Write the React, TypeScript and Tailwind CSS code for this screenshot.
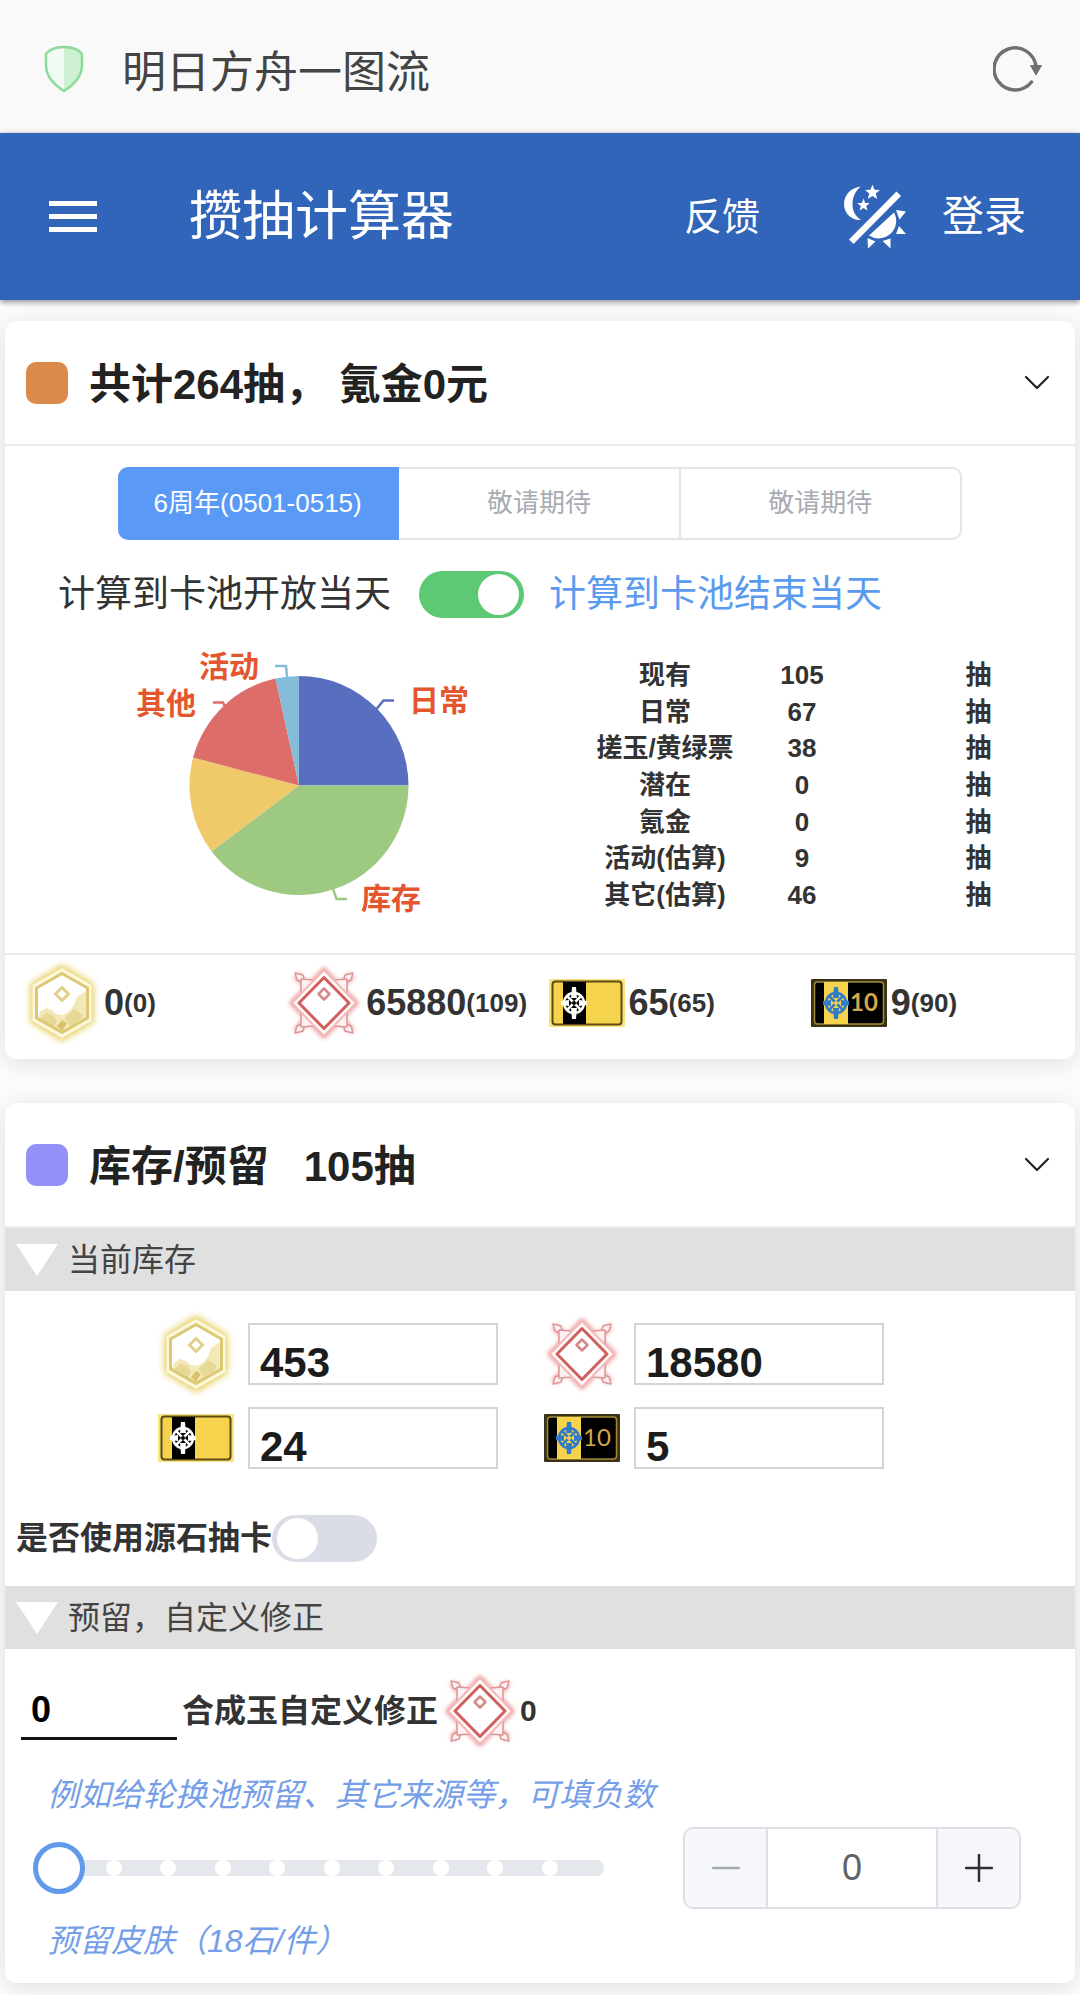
import { useState } from 'react';
import type { ReactNode } from 'react';

type IconProps = { className?: string };

const POOLS = [
  { id: 'anniversary', label: '6周年(0501-0515)', disabled: false },
  { id: 'tbd-1', label: '敬请期待', disabled: true },
  { id: 'tbd-2', label: '敬请期待', disabled: true },
];

const SUMMARY = [
  { name: '现有', count: 105 },
  { name: '日常', count: 67 },
  { name: '搓玉/黄绿票', count: 38 },
  { name: '潜在', count: 0 },
  { name: '氪金', count: 0 },
  { name: '活动(估算)', count: 9 },
  { name: '其它(估算)', count: 46 },
];

const STEPS = [1, 2, 3, 4, 5, 6, 7, 8, 9];

/* ---------- icons ---------- */

function ShieldIcon() {
  return (
    <svg viewBox="0 0 40 48" className="h-12 w-10" aria-hidden="true">
      <path d="M20 2C13 2 6.500 4.500 2.500 8.500V20c0 10 7 19.500 17.500 26z" fill="#f1fbf3" />
      <path d="M20 2c7 0 13.500 2.500 17.500 6.500V20c0 10-7 19.500-17.500 26z" fill="#cdf0d3" />
      <path
        d="M20 2C13 2 5.500 4.500 2 9v11c0 10.500 7.500 19.500 18 26 10.500-6.500 18-15.500 18-26V9C34.500 4.500 27 2 20 2z"
        fill="none"
        stroke="#8ddb9b"
        strokeWidth="2.500"
        strokeLinejoin="round"
      />
    </svg>
  );
}

function ReloadIcon() {
  return (
    <svg viewBox="0 0 50 50" className="h-[50px] w-[50px]" aria-hidden="true">
      <path d="M38.500 38A21 21 0 1 1 43 23" fill="none" stroke="#707070" strokeWidth="3.500" strokeLinecap="round" />
      <path d="M37.500 21.500h11L43 31z" fill="#707070" stroke="#707070" strokeLinejoin="round" />
    </svg>
  );
}

function DayNightIcon() {
  return (
    <svg viewBox="0 0 62 64" className="h-16 w-[62px]" fill="#fff" aria-hidden="true">
      <path d="M17 1.500C7 2.500 0 10 0 19s7 16.500 17 16C11.500 31.500 8.500 26 8.500 19S11.500 5.500 17 1.500z" />
      <path d="M28.500-.5l2 5.200 5.500.3-4.300 3.500 1.500 5.500-4.700-3.100-4.700 3.100 1.500-5.500L21 5l5.500-.3z" />
      <path d="M19.500 13.500l1.700 4.400 4.600.2-3.600 2.900 1.300 4.600-4-2.600-4 2.600 1.300-4.600-3.600-2.900 4.600-.2z" />
      <path d="M52.500 6.500L57 11 9.500 59 5 54.500z" />
      <path d="M25 50.500L50 27.500A17.500 17.500 0 0 1 25 50.500z" />
      <path d="M52 25l10 1.500-6.500 8z" />
      <path d="M55 41l7 8H52z" />
      <path d="M46.500 53.500v10L38.500 56z" />
      <path d="M23.500 53l8 3.500-7.500 7z" />
    </svg>
  );
}

function ChevronIcon() {
  return (
    <svg viewBox="0 0 26 16" className="h-4 w-[26px]" aria-hidden="true">
      <path d="M2 2l11 11L24 2" fill="none" stroke="#222" strokeWidth="2.200" strokeLinecap="round" strokeLinejoin="round" />
    </svg>
  );
}

// 源石
function OriginiteIcon({ className = '' }: IconProps) {
  return (
    <svg viewBox="0 0 80 80" className={`h-20 w-20 shrink-0 overflow-visible ${className}`} aria-hidden="true">
      <path d="M40 6l28 17v34L40 74 12 57V23z" fill="#e8d36c" stroke="#e8d36c" strokeWidth="8" strokeLinejoin="round" className="blur-[3px]" />
      <path d="M40 5l29.500 17v36L40 75 10.500 58V22z" fill="#fdf8dc" />
      <path d="M40 10l26 15v30L40 70 14 55V25z" fill="#fff" />
      <path d="M64 28v27L40 69 16 55l2-6 6-4 6 2 4 4 7 1 7-4 4-6 3-8z" fill="#f3e8b8" />
      <path d="M24 50l7 2 4 6-3 6-14-8zM52 46l9 6-3 5-10 6-5-8z" fill="#e8d896" />
      <path d="M40 57l5 3-5 8-5-5z" fill="#d9c36a" />
      <path d="M40 10.500l25.500 14.500v30L40 69.500 14.500 55V25z" fill="none" stroke="#dcc873" strokeWidth="3" />
      <path d="M40 24.500l6.500 6.500-6.500 6.500-6.500-6.500z" fill="#fff" stroke="#e0d08a" strokeWidth="3" />
    </svg>
  );
}

// 合成玉
function OrundumIcon({ className = '' }: IconProps) {
  return (
    <svg viewBox="0 0 80 80" className={`h-20 w-20 shrink-0 ${className}`} fill="none" strokeLinejoin="round" aria-hidden="true">
      <g stroke="#ee9c9c" strokeWidth="5" className="blur-[2px]">
        <path d="M40 7l32 33-32 33L8 40z" />
        <path d="M12 12l16 16M68 12L52 28M12 68l16-16M68 68L52 52" strokeWidth="7" />
      </g>
      <g stroke="#dd9696" strokeWidth="1.500" fill="#fdf0f0">
        <path d="M11 10l8 2 2 8-8-3zM69 10l-8 2-2 8 8-3zM11 70l8-2 2-8-8 3zM69 70l-8-2-2-8 8 3z" />
        <path d="M17 16l12 1 4 5-12 12-4-5zM63 16l-12 1-4 5 12 12 4-5zM17 64l12-1 4-5-12-12-4 5zM63 64l-12-1-4-5 12-12 4 5z" />
      </g>
      <path d="M40 7l32 33-32 33L8 40z" fill="#fff8f7" stroke="#f2b9b9" strokeWidth="2" />
      <path d="M40 14.500L65 40 40 65.500 15 40z" fill="#fff" stroke="#cf6060" strokeWidth="3" />
      <path d="M40 25.500l5.500 5.500-5.500 5.500-5.500-5.500z" fill="#fff" stroke="#d58a8a" strokeWidth="2.500" />
    </svg>
  );
}

function Crosshair({ color, hole }: { color: string; hole: string }) {
  return (
    <g>
      <circle cx="25" cy="24" r="10" fill={hole} stroke={color} strokeWidth="2.500" />
      <path d="M18 17l14 14M32 17L18 31" stroke={color} strokeWidth="2.500" />
      <path d="M23 8h4l1 11h-6zM23 40h4l1-11h-6zM12 22v4l8 1v-6zM38 22v4l-8 1v-6z" fill={color} />
      <circle cx="25" cy="24" r="2" fill={hole} />
    </g>
  );
}

// 单抽券
function TicketIcon({ className = '' }: IconProps) {
  return (
    <svg viewBox="0 0 76 48" className={`mx-[2px] h-12 w-[76px] shrink-0 ${className}`} aria-hidden="true">
      <rect width="76" height="48" fill="#f8e37c" />
      <rect x="3.500" y="2.500" width="69" height="43" rx="3" fill="#f5d34c" stroke="#5c4a12" strokeWidth="2" />
      <rect x="14" y="3" width="23" height="42" fill="#000" />
      <Crosshair color="#fff" hole="#000" />
    </svg>
  );
}

// 十连券
function TenTicketIcon({ className = '' }: IconProps) {
  return (
    <svg viewBox="0 0 76 48" className={`mx-[2px] h-12 w-[76px] shrink-0 ${className}`} aria-hidden="true">
      <rect width="76" height="48" rx="1" fill="#3a3216" />
      <rect x="3.500" y="3" width="69" height="42" rx="3" fill="#000" stroke="#a18a35" strokeWidth="1.500" />
      <rect x="13" y="3" width="24" height="42" fill="#f5d34c" />
      <Crosshair color="#2f7bc8" hole="#f5d34c" />
      <text x="53" y="32" textAnchor="middle" fontFamily="Lato, sans-serif" fontSize="24" fill="#d3a84a">
        10
      </text>
    </svg>
  );
}

/* ---------- building blocks ---------- */

type CardProps = { color: string; title: string; children: ReactNode };

function Card({ color, title, children }: CardProps) {
  return (
    <section className="rounded-xl bg-white shadow-[0_4px_24px_rgba(0,0,0,0.12)]">
      <header className="flex h-[125px] items-center border-b-2 border-[#ececee] pr-[25px] pl-[21px]">
        <span className={`h-[42px] w-[42px] rounded-[10px] ${color}`} />
        <h2 className="ml-[21px] pt-1 text-[42px] leading-[60px] font-bold whitespace-pre text-[#222]">{title}</h2>
        <button type="button" aria-label="展开或收起" className="ml-auto">
          <ChevronIcon />
        </button>
      </header>
      {children}
    </section>
  );
}

function SectionBar({ title }: { title: string }) {
  return (
    <h3 className="flex h-[63px] items-center bg-[#e0e0e0] pl-[11px] text-[32px] leading-[48px] text-[#444]">
      <svg viewBox="0 0 42 32" className="mr-[10px] h-8 w-[42px]" aria-hidden="true">
        <path d="M0 0h42L21 32z" fill="#fff" />
      </svg>
      {title}
    </h3>
  );
}

type SwitchProps = { id: string; checked: boolean; onChange: (checked: boolean) => void };

function Switch({ id, checked, onChange }: SwitchProps) {
  return (
    <input
      id={id}
      type="checkbox"
      role="switch"
      checked={checked}
      onChange={(e) => onChange(e.target.checked)}
      className="flex h-[47px] w-[105px] shrink-0 appearance-none items-center rounded-full bg-[#dadde5] px-[5px] before:h-[41px] before:w-[41px] before:rounded-full before:bg-white checked:justify-end checked:bg-[#5ec974]"
    />
  );
}

function PieChart() {
  return (
    <svg viewBox="0 0 535 335" className="h-[335px] w-[535px]" role="img" aria-label="抽数来源">
      <path d="M294 167.500V58A109.500 109.500 0 0 1 403.500 167.500z" fill="#5a6ebf" />
      <path d="M294 167.500H403.500A109.500 109.500 0 0 1 206.500 233.300z" fill="#9dca80" />
      <path d="M294 167.500L206.500 233.300A109.500 109.500 0 0 1 188.100 139.500z" fill="#f0c96b" />
      <path d="M294 167.500L188.100 139.500A109.500 109.500 0 0 1 270.500 60.500z" fill="#dc6d69" />
      <path d="M294 167.500L270.500 60.500A109.500 109.500 0 0 1 294 58z" fill="#84bcd9" />
      <g fill="none" strokeWidth="2.500">
        <path d="M371.500 91l7-8.500H389" stroke="#5a6ebf" />
        <path d="M328 271l3.500 10H342" stroke="#9dca80" />
        <path d="M220 89l-2-4.500H208" stroke="#dc6d69" />
        <path d="M282 59l-1-11H270" stroke="#84bcd9" />
      </g>
      <g fill="#e4572e" fontSize="30" fontWeight="700">
        <text x="194" y="59">活动</text>
        <text x="131" y="96">其他</text>
        <text x="404" y="93">日常</text>
        <text x="356" y="291">库存</text>
      </g>
    </svg>
  );
}

type StockProps = { id: string; label: string; icon: ReactNode; value: string; onChange: (value: string) => void };

function StockField({ id, label, icon, value, onChange }: StockProps) {
  return (
    <div className="flex h-[84px] items-center gap-3">
      <label htmlFor={id} aria-label={label}>
        {icon}
      </label>
      <input
        id={id}
        value={value}
        onChange={(e) => onChange(e.target.value)}
        className="h-[62px] w-[250px] border-2 border-[#d4d4d4] px-[10px] pt-[18px] text-[42px] leading-[42px] font-bold text-[#1c1c1c]"
      />
    </div>
  );
}

function Total({ icon, amount, pulls }: { icon: ReactNode; amount: number; pulls: number }) {
  return (
    <div className="flex items-center gap-0.5 font-bold text-[#333]">
      {icon}
      <span className="flex items-center">
        <span className="text-[36px] leading-[48px]">{amount}</span>
        <span className="text-[26px] leading-[48px]">({pulls})</span>
      </span>
    </div>
  );
}

/* ---------- page ---------- */

export default function App() {
  const [pool, setPool] = useState('anniversary');
  const [untilEnd, setUntilEnd] = useState(true);
  const [useOriginite, setUseOriginite] = useState(false);
  const [stock, setStock] = useState({ originite: '453', orundum: '18580', ticket: '24', ten: '5' });
  const [custom, setCustom] = useState('0');
  const [skins, setSkins] = useState(0);

  return (
    <div
      lang="zh-CN"
      className="min-h-screen bg-[#fcfcfc] pb-[11px] text-[#333] [font-family:'Liberation_Sans','Noto_Sans_CJK_SC',sans-serif]"
    >
      <div className="flex h-[133px] items-center bg-[#f9f9f9] pt-1 pr-[37px] pl-11">
        <ShieldIcon />
        <span className="ml-[38px] pt-2 text-[44px] leading-[64px] text-[#444]">明日方舟一图流</span>
        <button type="button" aria-label="刷新" className="ml-auto">
          <ReloadIcon />
        </button>
      </div>

      <nav className="flex h-[167px] items-center bg-[#3165b9] pr-[54px] pl-[49px] text-white shadow-[0_2px_6px_rgba(0,0,0,0.45)]">
        <button type="button" aria-label="菜单" className="flex flex-col gap-2">
          <span className="h-[5px] w-12 bg-white" />
          <span className="h-[5px] w-12 bg-white" />
          <span className="h-[5px] w-12 bg-white" />
        </button>
        <h1 className="ml-[92px] text-[53px] leading-[72px]">攒抽计算器</h1>
        <a href="#feedback" className="ml-auto text-[38px] leading-[60px]">反馈</a>
        <button type="button" aria-label="切换主题" className="mr-9 ml-[84px]">
          <DayNightIcon />
        </button>
        <a href="#login" className="text-[42px] leading-[60px]">登录</a>
      </nav>

      <main className="flex flex-col gap-11 px-[5px] pt-[21px]">
        <Card color="bg-[#dc8a4b]" title="共计264抽， 氪金0元">
          <div role="radiogroup" aria-label="卡池" className="mx-auto mt-[21px] grid h-[73px] w-[844px] grid-cols-3 text-[26px]">
            {POOLS.map((item) => (
              <label
                key={item.id}
                className="relative flex items-center justify-center border-y-2 border-r-2 border-[#e3e5e9] text-[#a8abb2] first:rounded-l-[10px] last:rounded-r-[10px] has-checked:border-[#5a9af6] has-checked:bg-[#5a9af6] has-checked:text-white"
              >
                <input
                  type="radio"
                  name="pool"
                  className="absolute inset-0 appearance-none"
                  checked={pool === item.id}
                  disabled={item.disabled}
                  onChange={() => setPool(item.id)}
                />
                {item.label}
              </label>
            ))}
          </div>

          <div className="mt-[31px] flex h-[47px] items-center pl-[53px] text-[37px] leading-[48px]">
            <span>计算到卡池开放当天</span>
            <span className="mr-[25px] ml-7 flex">
              <Switch id="until-end" checked={untilEnd} onChange={setUntilEnd} />
            </span>
            <label htmlFor="until-end" className="text-[#5a9bf0]">计算到卡池结束当天</label>
          </div>

          <div className="grid grid-cols-2 border-b-2 border-[#ececee]">
            <PieChart />
            <table className="mt-[39px] ml-14 h-64 table-fixed text-center text-[26px] leading-[32px] font-bold">
              <colgroup>
                <col className="w-[138px]" />
                <col className="w-[136px]" />
                <col />
              </colgroup>
              <tbody>
                {SUMMARY.map((row) => (
                  <tr key={row.name}>
                    <td className="whitespace-nowrap">{row.name}</td>
                    <td>{row.count}</td>
                    <td className="pl-3">抽</td>
                  </tr>
                ))}
              </tbody>
            </table>
          </div>

          <div className="grid h-[104px] grid-cols-4 items-center pr-1 pb-2 pl-[17px]">
            <Total icon={<OriginiteIcon />} amount={0} pulls={0} />
            <Total icon={<OrundumIcon />} amount={65880} pulls={109} />
            <Total icon={<TicketIcon />} amount={65} pulls={65} />
            <Total icon={<TenTicketIcon />} amount={9} pulls={90} />
          </div>
        </Card>

        <Card color="bg-[#9391f7]" title="库存/预留   105抽">
          <SectionBar title="当前库存" />
          <div className="grid grid-cols-[342px_342px] justify-center gap-x-11 pt-[21px] pr-10">
            <StockField
              id="originite"
              label="源石"
              icon={<OriginiteIcon />}
              value={stock.originite}
              onChange={(v) => setStock({ ...stock, originite: v })}
            />
            <StockField
              id="orundum"
              label="合成玉"
              icon={<OrundumIcon />}
              value={stock.orundum}
              onChange={(v) => setStock({ ...stock, orundum: v })}
            />
            <StockField
              id="ticket"
              label="单抽券"
              icon={<TicketIcon />}
              value={stock.ticket}
              onChange={(v) => setStock({ ...stock, ticket: v })}
            />
            <StockField
              id="ten"
              label="十连券"
              icon={<TenTicketIcon />}
              value={stock.ten}
              onChange={(v) => setStock({ ...stock, ten: v })}
            />
          </div>
          <div className="flex items-center pt-[35px] pb-6 pl-[11px]">
            <label htmlFor="use-originite" className="text-[32px] leading-[47px] font-bold">是否使用源石抽卡</label>
            <Switch id="use-originite" checked={useOriginite} onChange={setUseOriginite} />
          </div>

          <SectionBar title="预留，自定义修正" />
          <div className="flex items-center pt-[22px] pl-4 text-[32px] leading-[48px] font-bold">
            <input
              id="custom"
              value={custom}
              onChange={(e) => setCustom(e.target.value)}
              className="h-[58px] w-[156px] border-b-[3px] border-[#111] px-[10px] text-[36px] text-black"
            />
            <label htmlFor="custom" className="ml-[5px]">合成玉自定义修正</label>
            <OrundumIcon className="ml-0.5" />
            <span className="text-[30px]">0</span>
          </div>
          <p className="mt-5 pl-[42px] text-[32px] leading-[48px] text-[#759ee8] italic">
            例如给轮换池预留、其它来源等，可填负数
          </p>
          <div className="mt-2 flex h-[82px] items-center justify-between pr-[54px] pl-7">
            <div className="relative flex h-[52px] w-[597px] items-center px-[26px]">
              <div className="flex h-4 w-full items-center justify-evenly rounded-full bg-[#e4e7ec]">
                {STEPS.map((step) => (
                  <span key={step} className="-mx-2 h-4 w-4 rounded-full bg-white" />
                ))}
              </div>
              <input
                type="range"
                min={0}
                max={10}
                value={skins}
                aria-labelledby="skins-label"
                onChange={(e) => setSkins(Number(e.target.value))}
                className="absolute inset-0 w-full appearance-none bg-transparent [&::-webkit-slider-thumb]:h-[52px] [&::-webkit-slider-thumb]:w-[52px] [&::-webkit-slider-thumb]:appearance-none [&::-webkit-slider-thumb]:rounded-full [&::-webkit-slider-thumb]:border-[5px] [&::-webkit-slider-thumb]:border-[#5f9bea] [&::-webkit-slider-thumb]:bg-white"
              />
            </div>
            <div className="flex h-[82px] w-[338px] overflow-hidden rounded-[10px] border-2 border-[#dcdfe6]">
              <button
                type="button"
                aria-label="减少"
                disabled={skins === 0}
                onClick={() => setSkins(skins - 1)}
                className="flex w-[83px] items-center justify-center border-r-2 border-[#dcdfe6] bg-[#f5f7fa] text-[#303133] disabled:text-[#a8abb2]"
              >
                <svg viewBox="0 0 28 28" className="h-7 w-7" aria-hidden="true">
                  <path d="M1 14h26" stroke="currentColor" strokeWidth="2.500" strokeLinecap="round" />
                </svg>
              </button>
              <input
                value={skins}
                aria-labelledby="skins-label"
                onChange={(e) => setSkins(Number(e.target.value) || 0)}
                className="min-w-0 flex-1 text-center text-[36px] leading-[48px] text-[#606266]"
              />
              <button
                type="button"
                aria-label="增加"
                onClick={() => setSkins(Math.min(10, skins + 1))}
                className="flex w-[83px] items-center justify-center border-l-2 border-[#dcdfe6] bg-[#f5f7fa] text-[#303133]"
              >
                <svg viewBox="0 0 28 28" className="h-7 w-7" aria-hidden="true">
                  <path d="M1 14h26M14 1v26" stroke="currentColor" strokeWidth="2.500" strokeLinecap="round" />
                </svg>
              </button>
            </div>
          </div>
          <p id="skins-label" className="mt-2 pb-[18px] pl-[42px] text-[32px] leading-[48px] text-[#759ee8] italic">
            预留皮肤（18石/件）
          </p>
        </Card>
      </main>
    </div>
  );
}
